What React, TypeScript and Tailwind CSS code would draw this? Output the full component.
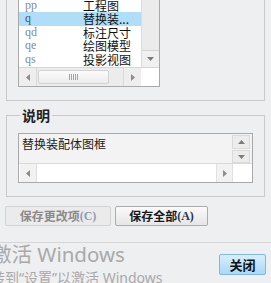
import React from 'react';

const rows: [string, string][] = [
  ['pp', '工程图'],
  ['q', '替换装...'],
  ['qd', '标注尺寸'],
  ['qe', '绘图模型'],
  ['qs', '投影视图'],
];

const ArrowL = () => (
  <svg width="4" height="7" viewBox="0 0 4 7"><path d="M4 0V7L0 3.5Z" fill="#8c8c8c" /></svg>
);
const ArrowR = () => (
  <svg width="4" height="7" viewBox="0 0 4 7"><path d="M0 0V7L4 3.5Z" fill="#8c8c8c" /></svg>
);
const ArrowD = () => (
  <svg width="7" height="4" viewBox="0 0 7 4"><path d="M0 0H7L3.5 4Z" fill="#7c7c7c" /></svg>
);
const ArrowU = () => (
  <svg width="7" height="4" viewBox="0 0 7 4"><path d="M0 4H7L3.5 0Z" fill="#7c7c7c" /></svg>
);

const Grip = () => (
  <svg width="9" height="6" viewBox="0 0 9 6">
    <path d="M0.5 0V6M2.5 0V6M4.5 0V6M6.5 0V6M8.5 0V6" stroke="#a5a5a5" strokeWidth="1" />
  </svg>
);

export default function App() {
  return (
    <div className="relative h-[283px] w-[271px] overflow-hidden bg-[#eeeff1] font-['Noto_Sans_CJK_SC',sans-serif] text-[12px] text-[#111]">
      {/* list group (top cut off) */}
      <div className="ml-[6px] w-[259px] border-x border-b border-[#c9c9c9] pb-[13px] pl-[11px]">
        <div className="w-[142px] border-x border-b border-[#a9a9a9] bg-white">
          <div className="flex h-[67px]">
            <div className="flex-1 overflow-hidden">
              <div className="-mt-[1.5px]">
                {rows.map(([code, name]) => {
                  const sel = code === 'q';
                  return (
                    <div
                      key={code}
                      className={
                        sel
                          ? 'flex h-[13.5px] items-center bg-[#b0ddf8]'
                          : 'flex h-[13.5px] items-center'
                      }
                    >
                      <span
                        className={
                          sel
                            ? "w-[64px] pl-[6px] font-['Liberation_Serif',serif] text-[12px] leading-[13.5px] text-[#3d5575]"
                            : "w-[64px] pl-[6px] font-['Liberation_Serif',serif] text-[12px] leading-[13.5px] text-[#7d8ca3]"
                        }
                      >
                        {code}
                      </span>
                      <span className="leading-[13.5px] text-[#111]">{name}</span>
                    </div>
                  );
                })}
              </div>
            </div>
            <div className="flex w-[18px] flex-col justify-end border-l border-[#dcdcdc] bg-[#ebebeb]">
              <div className="flex h-[17px] items-center justify-center border-t border-[#d3d3d3] bg-[#f0f0f0]">
                <ArrowD />
              </div>
            </div>
          </div>
          <div className="flex h-[19px] border-t border-[#d6d6d6]">
            <div className="flex w-[18px] items-center justify-center border-r border-[#dadada] bg-[#eeeeee]">
              <ArrowL />
            </div>
            <div className="flex w-[86px] items-center bg-[#ececec] pl-[1px]">
              <div className="flex h-[14px] w-[71px] items-center justify-center rounded-[2px] border border-[#d2d2d2] bg-gradient-to-b from-[#fbfbfb] to-[#ececec]">
                <Grip />
              </div>
            </div>
            <div className="flex w-[18px] items-center justify-center border-l border-[#dadada] bg-[#eeeeee]">
              <ArrowR />
            </div>
            <div className="w-[18px] bg-white" />
          </div>
        </div>
      </div>

      {/* 说明 group */}
      <fieldset className="mx-[6px] mt-[7px] border border-[#c9c9c9]">
        <legend className="ml-[13px] px-[2px] text-[14px] font-bold leading-[15px] text-[#222]">说明</legend>
        <div className="px-[11px] pb-[13px] pt-[10px]">
          <div className="flex h-[50px] flex-col border border-[#a9a9a9] bg-white">
            <div className="flex h-[29px] bg-[#f3f3f3]">
              <div className="flex-1 pl-[3px] pt-[2px] leading-[16px] text-[#222]">替换装配体图框</div>
              <div className="flex w-[20px] flex-col gap-[1px] pr-[2px] pt-[1px]">
                <div className="flex h-[14px] items-center justify-center border border-[#dadada] bg-[#ececec]">
                  <ArrowU />
                </div>
                <div className="flex h-[13px] items-center justify-center border border-[#dadada] bg-[#ececec]">
                  <ArrowD />
                </div>
              </div>
            </div>
            <div className="flex flex-1 border-t border-[#dadada]">
              <div className="ml-[1px] flex w-[17px] items-center justify-center border-r border-[#e0e0e0] bg-[#f2f2f2]">
                <ArrowL />
              </div>
              <div className="flex-1 bg-white" />
              <div className="flex w-[17px] items-center justify-center border-x border-[#e0e0e0] bg-[#f2f2f2]">
                <ArrowR />
              </div>
              <div className="w-[19px] bg-white" />
            </div>
          </div>
        </div>
      </fieldset>

      {/* save buttons */}
      <div className="mt-[9px] flex gap-[4px] pl-[5px]">
        <div className="flex h-[20px] w-[106px] items-center justify-center rounded-[2px] border border-[#d3d3d3] bg-[#ebebeb] font-bold text-[#8a8a8a]">
          保存更改项<span className="font-['Liberation_Serif',serif] text-[#8e9bb5]">(C)</span>
        </div>
        <div className="flex h-[20px] w-[93px] items-center justify-center rounded-[2px] border border-[#acacac] bg-gradient-to-b from-[#fafafa] to-[#e6e6e6] font-bold text-[#1a1a1a]">
          保存全部<span className="font-['Liberation_Serif',serif] text-[#2c3550]">(A)</span>
        </div>
      </div>

      {/* bottom bar */}
      <div className="mt-[16px] flex justify-end border-t border-[#d6d6d6] pr-[5px] pt-[11px]">
        <div className="flex h-[21px] w-[47px] items-center justify-center rounded-[2px] border border-[#7db8e6] bg-gradient-to-b from-[#d8effd] to-[#a9d8f6] text-[13px] font-bold text-[#111]">
          关闭
        </div>
      </div>

      {/* Windows activation watermark */}
      <div className="pointer-events-none absolute left-[-9px] top-[242px] whitespace-nowrap font-['Noto_Sans','Noto_Sans_CJK_SC',sans-serif] text-[#a9a9a9]">
        <div className="text-[20.5px] leading-[25px]">激活 Windows</div>
        <div className="mt-[2px] text-[14px] leading-[18px]">转到“设置”以激活 Windows</div>
      </div>
    </div>
  );
}
